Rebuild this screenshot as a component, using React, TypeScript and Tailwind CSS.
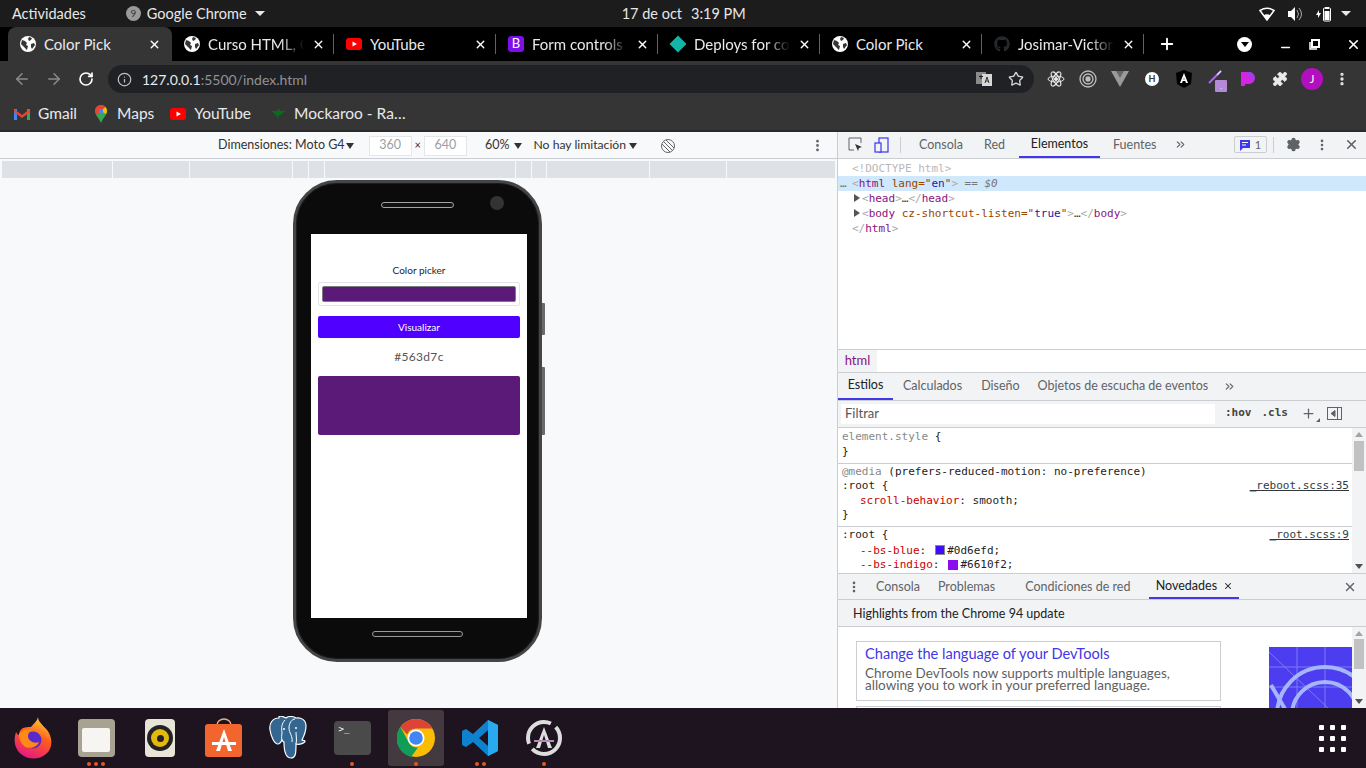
import { ArrowLeft, ArrowRight, ChevronsRight, EllipsisVertical, Info, Minus, Plus, Puzzle, RotateCw, Settings, Star, X } from 'lucide-react';
import { FaGithub } from 'react-icons/fa';
import type { ReactNode } from 'react';

const ui = "font-['Lato','Noto_Sans',sans-serif]";
const mono = "font-['DejaVu_Sans_Mono',monospace]";

function Globe() {
  return (
    <svg width="16" height="16" viewBox="0 0 16 16">
      <circle cx="8" cy="8" r="8" fill="#fff" />
      <path d="M2 4l3 1 2 2-1 2 2 1-1 4-3-3-3-3zM9 1l3 1-1 2-2 1-1-2zM11 8l3-1 1 2-3 4-1-2z" fill="#353535" />
    </svg>
  );
}

function YouTubeIcon() {
  return (
    <svg width="16" height="16" viewBox="0 0 16 16">
      <rect x="0" y="2" width="16" height="12" rx="3" fill="#f00" />
      <path d="M6.5 5.500v5L11 8z" fill="#fff" />
    </svg>
  );
}

function BootstrapIcon() {
  return <div className="flex h-4 w-4 items-center justify-center rounded-[3px] bg-[#7f0fe8] text-[13px] text-white">B</div>;
}

function NetlifyIcon() {
  return <div className="h-[12px] w-[12px] rotate-45 bg-[#13b5a6]" />;
}

function Tab({ icon, title, active, fade }: { icon: ReactNode; title: string; active?: boolean; fade?: boolean }) {
  return (
    <div className={`flex h-[34px] shrink-0 items-center pl-[12px] ${active ? 'w-[164px] rounded-t-lg bg-[#353535]' : 'w-[162px]'}`}>
      <div className="flex w-[16px] justify-center">{icon}</div>
      <div className={`ml-[8px] w-[100px] overflow-hidden whitespace-nowrap text-[15px] leading-[20px] text-[#e8eaed] ${fade ? '[mask-image:linear-gradient(90deg,#000_72%,transparent_96%)]' : ''}`}>{title}</div>
      <X size={13} strokeWidth={2.5} className="ml-[4px] text-white" />
      {!active && <div className="ml-auto h-[20px] w-px bg-[#5f6368]" />}
    </div>
  );
}

function Bookmark({ icon, label }: { icon: ReactNode; label: string }) {
  return (
    <div className="flex items-center gap-[8px] text-[15.5px] text-[#e8eaed]">
      <div className="flex w-[16px] justify-center">{icon}</div>
      <span>{label}</span>
    </div>
  );
}

function TopBar() {
  return (
    <div className={`flex h-[27px] items-center bg-[#1c1c1c] pl-[12px] pr-[15px] text-[14.5px] text-[#e8e8e8] ${ui}`}>
      <span>Actividades</span>
      <div className="ml-[40px] flex items-center gap-[6px]">
        <div className="flex h-[15px] w-[15px] items-center justify-center rounded-full bg-[#9a9a9a] text-[10px] text-[#333]">9</div>
        <span>Google Chrome</span>
        <div className="ml-[2px] h-0 w-0 border-x-[5px] border-t-[5px] border-x-transparent border-t-[#e8e8e8]" />
      </div>
      <div className="ml-[357px] flex gap-[9px]">
        <span>17 de oct</span>
        <span>3:19 PM</span>
      </div>
      <div className="ml-auto flex items-center">
        <svg width="16" height="14" viewBox="0 0 16 14"><path d="M1 3.500Q8-1 15 3.500L8 13z" fill="none" stroke="#fff" strokeWidth="1.500" /><path d="M4.500 8.500Q8 6 11.500 8.500L8 13z" fill="#fff" /></svg>
        <svg width="15" height="14" viewBox="0 0 15 14" className="ml-[13px]"><path d="M0 4h3l4-4v14l-4-4H0z" fill="#fff" /><path d="M9 3q3 4 0 8M11 1q5 6 0 12" stroke="#aaa" fill="none" /></svg>
        <svg width="16" height="16" viewBox="0 0 16 16" className="ml-[13px]"><path d="M0 9l3-5v3h2L2 12V9z" fill="#fff" /><rect x="7.500" y="2" width="7" height="13" rx="1" fill="none" stroke="#fff" /><rect x="9" y="1" width="4" height="2" fill="#fff" /><rect x="8.500" y="5" width="5" height="9" fill="#fff" /></svg>
        <div className="ml-[9px] h-0 w-0 border-x-[5px] border-t-[5px] border-x-transparent border-t-[#e8e8e8]" />
      </div>
    </div>
  );
}

function TabStrip() {
  return (
    <div className={`flex h-[34px] items-center bg-black pl-[8px] ${ui}`}>
      <Tab icon={<Globe />} title="Color Pick" active />
      <Tab icon={<Globe />} title="Curso HTML, CSS" fade />
      <Tab icon={<YouTubeIcon />} title="YouTube" />
      <Tab icon={<BootstrapIcon />} title="Form controls · Bootstrap" fade />
      <Tab icon={<NetlifyIcon />} title="Deploys for color" fade />
      <Tab icon={<Globe />} title="Color Pick" />
      <Tab icon={<FaGithub size={16} color="#24292e" />} title="Josimar-Victor/color" fade />
      <Plus size={18} strokeWidth={2.5} className="ml-[14px] text-white" />
      <div className="ml-[61px] flex h-[15px] w-[15px] items-center justify-center rounded-full bg-white">
        <div className="h-0 w-0 border-x-[4px] border-t-[5px] border-x-transparent border-t-black" />
      </div>
      <Minus size={13} strokeWidth={3} className="ml-[27px] mt-[6px] text-white" />
      <svg width="11" height="11" viewBox="0 0 11 11" className="ml-[17px]"><path d="M3 1h7v7H3z" fill="none" stroke="#fff" strokeWidth="2" /><path d="M1 3v7h7" fill="none" stroke="#fff" strokeWidth="1.500" /></svg>
      <X size={15} strokeWidth={2.5} className="ml-[26px] text-white" />
    </div>
  );
}

function ExtSlot({ children }: { children: ReactNode }) {
  return <div className="flex w-[32px] shrink-0 items-center justify-center">{children}</div>;
}

function ExtensionIcons() {
  return (
    <div className="ml-[6px] flex items-center">
      <ExtSlot><svg width="18" height="18" viewBox="0 0 18 18" fill="none" stroke="#e8eaed"><ellipse cx="9" cy="9" rx="8" ry="3" /><ellipse cx="9" cy="9" rx="8" ry="3" transform="rotate(60 9 9)" /><ellipse cx="9" cy="9" rx="8" ry="3" transform="rotate(120 9 9)" /><circle cx="9" cy="9" r="1.500" fill="#e8eaed" /></svg></ExtSlot>
      <ExtSlot><svg width="18" height="18" viewBox="0 0 18 18" fill="none" stroke="#bdbdbd" strokeWidth="1.300"><circle cx="9" cy="9" r="8" /><circle cx="9" cy="9" r="5" /><circle cx="9" cy="9" r="2" fill="#bdbdbd" /></svg></ExtSlot>
      <ExtSlot><svg width="18" height="16" viewBox="0 0 18 16"><path d="M0 0h18L9 16z" fill="#9a9a9a" /><path d="M5 0h8L9 7z" fill="#666" /></svg></ExtSlot>
      <ExtSlot><div className={`flex h-[14px] w-[14px] items-center justify-center rounded-full bg-white text-[9px] font-bold text-[#333] ${ui}`}>H</div></ExtSlot>
      <ExtSlot><svg width="16" height="18" viewBox="0 0 16 18"><path d="M8 0l8 3-1 11-7 4-7-4L0 3z" fill="#000" /><path d="M8 3l4 10h-2l-.8-2H6.800L6 13H4zM7.500 9.500h1L8 7.500z" fill="#fff" /></svg></ExtSlot>
      <ExtSlot>
        <div className="relative h-[18px] w-[18px]">
          <svg width="16" height="16" viewBox="0 0 16 16"><path d="M14 1L2 13" stroke="#a86be0" strokeWidth="2" /><path d="M14 1l-4 4" stroke="#ddd" strokeWidth="1.500" /></svg>
          <div className="absolute left-[8px] top-[10px] flex h-[12px] w-[12px] items-center justify-center rounded-[1px] bg-[#b48ad6] text-[7px] text-white">.</div>
        </div>
      </ExtSlot>
      <ExtSlot><svg width="16" height="16" viewBox="0 0 16 16"><path d="M1 1h8a6 6 0 010 12H5v2H1z" fill="#d426e0" /><path d="M6 1h3a6 6 0 014 10z" fill="#a23de8" /></svg></ExtSlot>
      <ExtSlot><Puzzle size={16} fill="#e8eaed" strokeWidth={1} className="text-[#e8eaed]" /></ExtSlot>
      <ExtSlot><div className={`flex h-[22px] w-[22px] items-center justify-center rounded-full bg-[#b30fbf] text-[11px] text-white ${ui}`}>J</div></ExtSlot>
      <EllipsisVertical size={16} strokeWidth={3} className="ml-[6px] text-[#e8eaed]" />
    </div>
  );
}

function Toolbar() {
  return (
    <div className={`flex h-[36px] items-center bg-[#353535] pl-[13px] ${ui}`}>
      <ArrowLeft size={18} className="text-[#8a8b8d]" />
      <ArrowRight size={18} className="ml-[14px] text-[#8a8b8d]" />
      <RotateCw size={16} strokeWidth={2.5} className="ml-[15px] text-white" />
      <div className="ml-[14px] flex h-[28px] w-[926px] items-center rounded-full bg-[#202124] pl-[9px] pr-[10px] text-[14px]">
        <Info size={15} className="text-[#bdc1c6]" />
        <span className="ml-[10px] text-[#e8eaed]">127.0.0.1</span>
        <span className="text-[#8f9296]">:5500/index.html</span>
        <svg width="16" height="16" viewBox="0 0 16 16" className="ml-auto">
          <rect x="0" y="1" width="10" height="12" fill="#8a8a8a" />
          <rect x="6" y="3" width="10" height="12" fill="#d8d8d8" />
          <path d="M3 5.500h4M5 4v4" stroke="#222" />
          <path d="M9 12l2-6 2 6M9.800 10h2.400" stroke="#333" fill="none" />
        </svg>
        <Star size={16} className="ml-[16px] text-[#d5d5d5]" />
      </div>
      <ExtensionIcons />
    </div>
  );
}

function BookmarksBar() {
  return (
    <div className={`flex h-[33px] items-center gap-[16px] bg-[#353535] pl-[14px] ${ui}`}>
      <Bookmark
        icon={<svg width="16" height="12" viewBox="0 0 16 12"><path d="M0 12V1l3 0v11z" fill="#4285f4" /><path d="M13 12V1h3v11z" fill="#34a853" /><path d="M0 1l8 6 8-6v3l-8 6-8-6z" fill="#ea4335" /></svg>}
        label="Gmail"
      />
      <Bookmark
        icon={<svg width="12" height="18" viewBox="0 0 12 18"><path d="M6 0a6 6 0 016 6c0 4-4 7-6 12-2-5-6-8-6-12a6 6 0 016-6z" fill="#34a853" /><path d="M6 0a6 6 0 014.500 2L2 10C1 8.500 0 7.500 0 6a6 6 0 016-6z" fill="#ea4335" /><path d="M10.500 2A6 6 0 0112 6c0 1-.5 2-1 3L6 6z" fill="#fbbc04" /><circle cx="6" cy="6" r="2.200" fill="#4285f4" /></svg>}
        label="Maps"
      />
      <div className="mr-[3px]"><Bookmark icon={<YouTubeIcon />} label="YouTube" /></div>
      <Bookmark
        icon={<svg width="16" height="12" viewBox="0 0 16 12"><path d="M1 3h6l2-3 1 3h6l-5 3 1 1-3 0-1 5-1-5-3 1 1-2z" fill="#0b6b1f" /></svg>}
        label="Mockaroo - Ra…"
      />
    </div>
  );
}

function DeviceToolbar() {
  return (
    <div className={`flex h-[27px] items-center border-b border-[#cacdd1] bg-[#f8f9fa] pt-px text-[12.5px] text-[#333] ${ui}`}>
      <span className="ml-[218px]">Dimensiones: Moto G4</span>
      <div className="ml-px h-0 w-0 border-x-[4px] border-t-[6px] border-x-transparent border-t-[#333]" />
      <div className="ml-[15px] flex h-[20px] w-[43px] items-center justify-center border border-[#e4e6e8] bg-white text-[#9aa0a6]">360</div>
      <span className="mx-[3px] text-[11px]">×</span>
      <div className="flex h-[20px] w-[43px] items-center justify-center border border-[#e4e6e8] bg-white text-[#9aa0a6]">640</div>
      <span className="ml-[18px]">60%</span>
      <div className="ml-[5px] h-0 w-0 border-x-[4px] border-t-[6px] border-x-transparent border-t-[#333]" />
      <span className="ml-[11px] text-[12.2px]">No hay limitación</span>
      <div className="ml-[3px] h-0 w-0 border-x-[4px] border-t-[6px] border-x-transparent border-t-[#333]" />
      <svg width="14" height="14" viewBox="0 0 14 14" fill="none" stroke="#666" className="ml-[24px]"><circle cx="7" cy="7" r="6.500" /><path d="M2.500 2.500l9 9M5 1l8 8M1 5l8 8" /></svg>
      <EllipsisVertical size={15} strokeWidth={2.5} className="ml-auto mr-[12px] text-[#5f6368]" />
    </div>
  );
}

function Ruler() {
  return (
    <div className="mx-[2px] mt-[2px] flex h-[17px] gap-px">
      <div className="w-[110px] bg-[#dee1e6]" />
      <div className="w-[76px] bg-[#dee1e6]" />
      <div className="w-[102px] bg-[#dee1e6]" />
      <div className="w-[15px] bg-[#dee1e6]" />
      <div className="w-[15px] bg-[#dee1e6]" />
      <div className="w-[190px] bg-[#dee1e6]" />
      <div className="w-[15px] bg-[#dee1e6]" />
      <div className="w-[14px] bg-[#dee1e6]" />
      <div className="w-[102px] bg-[#dee1e6]" />
      <div className="w-[76px] bg-[#dee1e6]" />
      <div className="w-[108px] bg-[#dee1e6]" />
    </div>
  );
}

function Phone() {
  return (
    <div className="relative ml-[293px] mt-[2px] h-[482px] w-[249px] rounded-[44px] border-[3px] border-[#454545] bg-[#0b0b0b] pl-[15px] pt-[51px] shadow-[inset_0_0_0_1px_#1c1c1c]">
      <div className="absolute left-[85px] top-[19px] h-[6px] w-[73px] rounded-full border border-[#a5a5a5] bg-[#111]" />
      <div className="absolute left-[194px] top-[13px] h-[14px] w-[14px] rounded-full bg-[#333]" />
      <div className="absolute -right-[6px] top-[120px] h-[32px] w-[3px] rounded-r-[1px] bg-[#6a6a6a]" />
      <div className="absolute -right-[6px] top-[184px] h-[68px] w-[3px] rounded-r-[1px] bg-[#6a6a6a]" />
      <div className="absolute left-[76px] top-[448px] h-[6px] w-[91px] rounded-full border border-[#999] bg-[#111]" />
      <div className={`flex h-[384px] w-[216px] flex-col items-center bg-white px-[7px] pt-[30px] ${ui}`}>
        <div className="text-[10px] leading-[12px] text-[#212529]">Color picker</div>
        <div className="mt-[6px] flex h-[24px] w-full items-center rounded-[2px] border border-[#e2e4e8] bg-white px-[3px]">
          <div className="h-[16px] w-full rounded-[2px] border border-[#7a7a80] bg-[#5c1a78]" />
        </div>
        <div className="mt-[10px] flex h-[22px] w-full items-center justify-center rounded-[2px] bg-[#4f00ff] text-[10px] text-white">Visualizar</div>
        <div className="mt-[12px] text-[12px] leading-[14px] tracking-[0.3px] text-[#555]">#563d7c</div>
        <div className="mt-[12px] h-[59px] w-full rounded-[2px] bg-[#5c1a78]" />
      </div>
    </div>
  );
}

function DomLine({ children, selected }: { children: ReactNode; selected?: boolean }) {
  return <div className={`h-[15px] whitespace-nowrap leading-[15px] ${selected ? 'bg-[#cfe8fc]' : ''}`}>{children}</div>;
}

function TagText({ children }: { children: ReactNode }) {
  return <span className="text-[#a8a8a8]">{children}</span>;
}

function Arrow() {
  return <span className="ml-[16px] mr-[2px] inline-block h-0 w-0 border-y-[4px] border-l-[6px] border-y-transparent border-l-[#555]" />;
}

function DevTabs() {
  return (
    <div className={`flex h-[27px] items-center border-b border-[#cacdd1] bg-[#f1f3f4] text-[12.5px] text-[#5f6368] ${ui}`}>
      <svg width="15" height="15" viewBox="0 0 15 15" fill="none" className="ml-[10px]"><path d="M6 13H1V1h12v5" stroke="#5f6368" /><path d="M7 7l7 3-3 1-1 3z" fill="#333" /></svg>
      <svg width="15" height="16" viewBox="0 0 15 16" fill="none" stroke="#3b36ef" strokeWidth="1.200" className="ml-[11px]"><rect x="5" y="1" width="9" height="14" /><rect x="1" y="6" width="6" height="9" fill="#f1f3f4" /></svg>
      <div className="ml-[11px] h-[16px] w-px bg-[#cacdd1]" />
      <span className="ml-[18px]">Consola</span>
      <span className="ml-[21px]">Red</span>
      <div className="ml-[14px] flex h-full w-[81px] items-center justify-center border-b-2 border-[#4338e8] text-[#202124]">Elementos</div>
      <span className="ml-[13px]">Fuentes</span>
      <ChevronsRight size={13} className="ml-[17px]" />
      <div className="ml-[47px] flex h-[17px] w-[33px] items-center justify-center gap-[4px] rounded-[2px] border border-[#cacdd1] text-[11px]">
        <svg width="12" height="12" viewBox="0 0 12 12"><path d="M1 1h10v8H4l-3 3z" fill="#3b36ef" /><path d="M3 3.500h6M3 6h4" stroke="#fff" /></svg>
        <span>1</span>
      </div>
      <div className="ml-[6px] h-[16px] w-px bg-[#cacdd1]" />
      <Settings size={15} fill="#5f6368" className="ml-[12px] text-[#5f6368]" />
      <EllipsisVertical size={14} strokeWidth={2.5} className="ml-[14px]" />
      <X size={15} strokeWidth={2.5} className="ml-[15px]" />
    </div>
  );
}

function DomTree() {
  return (
    <div className={`h-[190px] pt-[2px] text-[11px] ${mono}`}>
      <DomLine><span className="ml-[14px] text-[#b8b8b8]">&lt;!DOCTYPE html&gt;</span></DomLine>
      <DomLine selected>
        <span className="inline-block w-[14px] pl-[2px] text-[#666]">…</span>
        <TagText>&lt;</TagText><span className="text-[#881280]">html</span> <span className="text-[#994500]">lang="</span><span className="text-[#1a1aa6]">en</span><span className="text-[#994500]">"</span><TagText>&gt;</TagText>
        <span className="text-[#777]"> == </span><span className="italic text-[#777]">$0</span>
      </DomLine>
      <DomLine>
        <Arrow /><TagText>&lt;</TagText><span className="text-[#881280]">head</span><TagText>&gt;</TagText><span className="text-[#333]">…</span><TagText>&lt;/</TagText><span className="text-[#881280]">head</span><TagText>&gt;</TagText>
      </DomLine>
      <DomLine>
        <Arrow /><TagText>&lt;</TagText><span className="text-[#881280]">body</span> <span className="text-[#994500]">cz-shortcut-listen="</span><span className="text-[#1a1aa6]">true</span><span className="text-[#994500]">"</span><TagText>&gt;</TagText><span className="text-[#333]">…</span><TagText>&lt;/</TagText><span className="text-[#881280]">body</span><TagText>&gt;</TagText>
      </DomLine>
      <DomLine><span className="ml-[14px]"><TagText>&lt;/</TagText><span className="text-[#881280]">html</span><TagText>&gt;</TagText></span></DomLine>
    </div>
  );
}

function SourceLink({ children }: { children: ReactNode }) {
  return <span className="ml-auto mr-[3px] text-[#303942] underline">{children}</span>;
}

function Scrollbar({ thumb }: { thumb: string }) {
  return (
    <div className="flex h-full w-[14px] shrink-0 flex-col items-center bg-[#f1f3f4] pt-[4px]">
      <div className="h-0 w-0 border-x-[4px] border-b-[5px] border-x-transparent border-b-[#a5a5a5]" />
      <div className={`w-[10px] bg-[#c1c1c1] ${thumb}`} />
      <div className="mb-[4px] mt-auto h-0 w-0 border-x-[4px] border-t-[5px] border-x-transparent border-t-[#505050]" />
    </div>
  );
}

function StylesPane() {
  return (
    <div className="flex h-[146px] overflow-hidden">
      <div className={`min-w-0 flex-1 text-[11px] leading-[13px] text-[#222] ${mono}`}>
        <div className="h-[36px] border-b border-[#cacdd1] pl-[4px] pt-px">
          <div className="leading-[15px]"><span className="text-[#888]">element.style</span> {'{'}</div>
          <div className="leading-[15px]">{'}'}</div>
        </div>
        <div className="h-[63px] border-b border-[#cacdd1] pl-[4px] pt-px">
          <div><span className="text-[#888]">@media</span> (prefers-reduced-motion: no-preference)</div>
          <div className="flex leading-[15px]"><span>:root {'{'}</span><SourceLink>_reboot.scss:35</SourceLink></div>
          <div className="pl-[18px] leading-[15px]"><span className="text-[#c80000]">scroll-behavior</span>: smooth;</div>
          <div className="leading-[14px]">{'}'}</div>
        </div>
        <div className="pl-[4px]">
          <div className="flex leading-[16px]"><span>:root {'{'}</span><SourceLink>_root.scss:9</SourceLink></div>
          <div className="flex items-center pl-[18px] leading-[15px]"><span className="text-[#c80000]">--bs-blue</span>:<span className="ml-[9px] mr-[2px] h-[10px] w-[10px] border border-[#888] bg-[#3f0dfd]" />#0d6efd;</div>
          <div className="flex items-center pl-[18px] leading-[14px]"><span className="text-[#c80000]">--bs-indigo</span>:<span className="ml-[9px] mr-[2px] h-[10px] w-[10px] bg-[#8a0df2]" />#6610f2;</div>
        </div>
      </div>
      <Scrollbar thumb="mt-[4px] h-[30px]" />
    </div>
  );
}

function WhatsNew() {
  return (
    <div className="flex h-[81px] overflow-hidden">
      <div className="min-w-0 flex-1 pl-[18px] pt-[14px]">
        <div className="h-[60px] w-[365px] border border-[#cacdd1] pl-[8px] pt-[2px]">
          <div className="h-[20px] text-[14.6px] leading-[20px] text-[#3f37e8]">Change the language of your DevTools</div>
          <div className="mt-[3px] text-[13.5px] leading-[12px] text-[#5f5f5f]">Chrome DevTools now supports multiple languages,<br />allowing you to work in your preferred language.</div>
        </div>
        <div className="mt-[5px] h-[10px] w-[365px] border border-[#cacdd1]" />
      </div>
      <svg width="83" height="62" viewBox="0 0 83 62" className="mt-[20px] shrink-0">
        <rect width="83" height="62" fill="#4d3df0" />
        <g fill="none" stroke="#7b7cf5"><path d="M0 20h83M28 0v62M0 5l60 57M56 0v62M0 40h83" /></g>
        <path d="M2 38l14 24" stroke="#a6b6fb" strokeWidth="4" />
        <circle cx="56" cy="68" r="48" fill="none" stroke="#a6b6fb" strokeWidth="4" />
        <circle cx="56" cy="68" r="33" fill="none" stroke="#a6b6fb" strokeWidth="4" />
      </svg>
      <Scrollbar thumb="mt-[3px] h-[30px]" />
    </div>
  );
}

function DevTools() {
  return (
    <div className={`flex w-[529px] shrink-0 flex-col border-l border-[#cacdd1] bg-white ${ui}`}>
      <DevTabs />
      <DomTree />
      <div className="flex h-[24px] border-y border-[#cacdd1] text-[13px]">
        <div className="flex w-[39px] items-center justify-center bg-[#f1f3f4] text-[#881280]">html</div>
      </div>
      <div className="flex h-[28px] items-center border-b border-[#cacdd1] bg-[#f1f3f4] text-[12.5px] text-[#5f6368]">
        <div className="flex h-full w-[55px] items-center justify-center border-b-2 border-[#4338e8] text-[#202124]">Estilos</div>
        <span className="ml-[10px]">Calculados</span>
        <span className="ml-[19px]">Diseño</span>
        <span className="ml-[18px]">Objetos de escucha de eventos</span>
        <ChevronsRight size={13} className="ml-[15px]" />
      </div>
      <div className="flex h-[27px] items-center border-b border-[#cacdd1] bg-[#f1f3f4] pl-[3px] pr-[14px]">
        <div className="flex h-[20px] w-[374px] items-center bg-white pl-[4px] text-[13px] text-[#555]">Filtrar</div>
        <span className={`ml-[10px] text-[11px] font-bold text-[#444] ${mono}`}>:hov</span>
        <span className={`ml-[10px] text-[11px] font-bold text-[#444] ${mono}`}>.cls</span>
        <Plus size={15} className="ml-[13px] text-[#5f6368]" />
        <div className="mt-[12px] h-0 w-0 border-b-[4px] border-l-[4px] border-b-[#5f6368] border-l-transparent" />
        <svg width="15" height="13" viewBox="0 0 15 13" className="ml-[7px]" fill="none" stroke="#5f6368"><rect x=".5" y=".5" width="14" height="12" /><path d="M10.500 .5v12" /><path d="M8 3.500v6l-4-3z" fill="#5f6368" /></svg>
      </div>
      <StylesPane />
      <div className="flex h-[27px] items-center border-y border-[#cacdd1] bg-[#f1f3f4] pt-px text-[12.5px] text-[#5f6368]">
        <EllipsisVertical size={14} strokeWidth={2.5} className="ml-[9px]" />
        <span className="ml-[15px]">Consola</span>
        <span className="ml-[18px]">Problemas</span>
        <span className="ml-[30px]">Condiciones de red</span>
        <div className="ml-[19px] flex h-full w-[90px] items-center justify-center gap-[6px] border-b-2 border-[#4338e8] text-[#202124]">Novedades <X size={10} strokeWidth={2.5} /></div>
        <X size={14} strokeWidth={2.5} className="ml-auto mr-[9px]" />
      </div>
      <div className="flex h-[27px] items-center border-b border-[#cacdd1] bg-[#f1f3f4] pl-[15px] pt-[2px] text-[12.5px] text-[#202124]">Highlights from the Chrome 94 update</div>
      <WhatsNew />
    </div>
  );
}

function Firefox() {
  return (
    <svg width="38" height="42" viewBox="0 0 38 42">
      <defs>
        <linearGradient id="ff" x1="0.7" y1="0" x2="0.3" y2="1"><stop offset="0" stopColor="#ffd02e" /><stop offset=".45" stopColor="#ff5a1f" /><stop offset="1" stopColor="#e31587" /></linearGradient>
      </defs>
      <path d="M24 0c0 6 8 10 11 16 4 8 3 16-3 21-7 6-18 6-25 0C1 32-1 24 2 15c1 2 2 3 3 3 0-3 1-5 4-7 3-1 5-1 8-1 2-3 6-5 7-10z" fill="url(#ff)" />
      <circle cx="19" cy="23" r="8.500" fill="#592acb" />
      <path d="M5 17c3-4 9-6 14-4-3 1-5 3-5 6 0 5 6 8 11 6-2 6-12 8-16 3-3-3-4-7-4-11z" fill="#ff8a16" />
    </svg>
  );
}

function Chrome() {
  return (
    <svg width="38" height="38" viewBox="0 0 38 38">
      <circle cx="19" cy="19" r="19" fill="#fbbc04" />
      <path d="M19 0a19 19 0 0116.500 9.500H19a9.500 9.500 0 00-9 6L3.500 8A19 19 0 0119 0z" fill="#db4437" />
      <path d="M3.500 8L12 24a9.500 9.500 0 009 4.500L14 38A19 19 0 013.500 8z" fill="#0f9d58" />
      <circle cx="19" cy="19" r="8.500" fill="#fff" />
      <circle cx="19" cy="19" r="6.800" fill="#4285f4" />
    </svg>
  );
}

function Postgres() {
  return (
    <svg width="38" height="44" viewBox="0 0 38 44">
      <path d="M10 2C3 2 0 8 1 14c1 6 4 14 8 14 2 0 3-2 4-4 1 1 1 2 2 2 0 6 1 16 7 16 5 0 5-6 5-14 4 1 9-1 9-3 0-1-2 0-3-1 2-4 4-10 4-14 0-6-5-9-10-8-3-2-8-2-10 0-2-1-5-2-7-2z" fill="#336791" stroke="#fff" strokeWidth="1.200" />
      <path d="M16 4c-3 3-4 8-3 12 0 3-1 6 0 8M26 3c-3 0-6 4-6 9 0 5 4 8 3 14M27 16c0 4 1 8 0 12" fill="none" stroke="#fff" strokeWidth="1" />
      <circle cx="15" cy="13" r="1" fill="#fff" />
      <circle cx="27" cy="12" r="1" fill="#fff" />
    </svg>
  );
}

function DockItem({ children, dots = 0, active }: { children: ReactNode; dots?: number; active?: boolean }) {
  return (
    <div className={`relative flex h-[56px] w-[56px] items-center justify-center rounded-[3px] ${active ? 'bg-[#43393f]' : ''}`}>
      {children}
      <div className="absolute bottom-0 flex gap-[3px]">
        {dots >= 1 && <div className="h-[4px] w-[4px] rounded-full bg-[#e95420]" />}
        {dots >= 2 && <div className="h-[4px] w-[4px] rounded-full bg-[#e95420]" />}
        {dots >= 3 && <div className="h-[4px] w-[4px] rounded-full bg-[#e95420]" />}
      </div>
    </div>
  );
}

function Dock() {
  return (
    <div className="flex h-[60px] items-center gap-[8px] bg-[#1d141f] pl-[4px]">
      <div className="ml-px"><DockItem><Firefox /></DockItem></div>
      <div className="-ml-px"><DockItem dots={3}>
        <div className="flex h-[38px] w-[37px] items-center justify-center rounded-[4px] bg-[#a8a293]">
          <div className="mt-[3px] h-[24px] w-[28px] rounded-[2px] bg-[#f6f5f2]" />
        </div>
      </DockItem></div>
      <DockItem>
        <div className="flex h-[38px] w-[30px] items-center justify-center rounded-[4px] bg-[#e8e5d8]">
          <div className="flex h-[26px] w-[26px] items-center justify-center rounded-full bg-[#222]">
            <div className="flex h-[18px] w-[18px] items-center justify-center rounded-full bg-[#e5b80f]">
              <div className="h-[7px] w-[7px] rounded-full bg-[#222]" />
            </div>
          </div>
        </div>
      </DockItem>
      <DockItem>
        <svg width="38" height="40" viewBox="0 0 38 40">
          <path d="M12 7a7 6 0 0114 0" fill="none" stroke="#e8b090" strokeWidth="1.500" />
          <rect y="6" width="37" height="33" rx="3" fill="#f2662e" />
          <path d="M19 11l8 22h-4l-4-14-4 14h-4zM7 24h24v3H7z" fill="#fff" />
        </svg>
      </DockItem>
      <DockItem><Postgres /></DockItem>
      <DockItem dots={1}>
        <div className={`h-[34px] w-[37px] rounded-[4px] bg-[#4a4a4a] pl-[5px] pt-[3px] text-[9px] leading-[11px] text-white ${mono}`}>&gt;_</div>
      </DockItem>
      <DockItem dots={1} active><Chrome /></DockItem>
      <DockItem dots={2}>
        <svg width="36" height="36" viewBox="0 0 36 36">
          <path d="M26 0l10 5v26l-10 5-15-14-7 5-4-2V11l4-2 7 5zM26 10l-9 8 9 8z" fill="#0f82cf" />
          <path d="M26 0l10 5v26l-10 5z" fill="#29a9f0" />
        </svg>
      </DockItem>
      <DockItem dots={1}>
        <svg width="38" height="38" viewBox="0 0 38 38" fill="none">
          <circle cx="19" cy="19" r="16" stroke="#ddd" strokeWidth="4" strokeDasharray="38 6" />
          <path d="M19 8l8 21h-4l-4-13-4 13h-4z" fill="#ddd" />
          <path d="M9 21h20v2H9z" fill="#b48ab4" />
        </svg>
      </DockItem>
      <div className="ml-auto mr-[20px] grid grid-cols-3 gap-[6px]">
        {[1, 2, 3, 4, 5, 6, 7, 8, 9].map((n) => (
          <div key={n} className="h-[5px] w-[5px] rounded-[1px] bg-white" />
        ))}
      </div>
    </div>
  );
}

export default function App() {
  return (
    <div className="flex h-[768px] w-[1366px] flex-col overflow-hidden bg-white">
      <TopBar />
      <TabStrip />
      <Toolbar />
      <BookmarksBar />
      <div className="h-[2px] bg-[#2a2a2a]" />
      <div className="flex h-[576px] min-h-0">
        <div className="flex min-w-0 flex-1 flex-col bg-[#f8f9fa]">
          <DeviceToolbar />
          <Ruler />
          <Phone />
        </div>
        <DevTools />
      </div>
      <Dock />
    </div>
  );
}
